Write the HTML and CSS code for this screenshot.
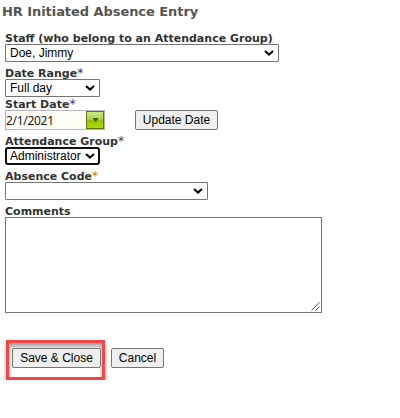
FILE: index.html
```html
<!DOCTYPE html>
<html lang="en">
  <head>
    <meta charset="UTF-8" />
    <meta name="viewport" content="width=device-width, initial-scale=1" />
    <title>HR Initiated Absence Entry</title>
    <link rel="stylesheet" href="styles.css">
  </head>
  <body>
    <h1 class="page-title">HR Initiated Absence Entry</h1>

    <form class="absence-form">
      <div class="field">
        <label for="staff">Staff (who belong to an Attendance Group)</label>
        <div class="select-box staff">
          <select id="staff"><option>Doe, Jimmy</option></select>
          <svg class="chevron" viewBox="0 0 10 6"><path d="M1 1l4 3.6L9 1" /></svg>
        </div>
      </div>

      <div class="field date-range-field">
        <label for="date-range">Date Range<span class="required">*</span></label>
        <div class="select-box short">
          <select id="date-range"><option>Full day</option></select>
          <svg class="chevron" viewBox="0 0 10 6"><path d="M1 1l4 3.6L9 1" /></svg>
        </div>
      </div>

      <div class="field">
        <label for="start-date">Start Date<span class="required">*</span></label>
        <div class="date-row">
          <div class="date-picker">
            <input type="text" id="start-date" value="2/1/2021" />
            <button type="button" class="date-toggle" aria-label="Open calendar">
              <svg viewBox="0 0 5 4"><path d="M0 0h5v1L3 3.5H2L0 1z" /></svg>
            </button>
          </div>
          <button type="button" class="btn update-btn">Update Date</button>
        </div>
      </div>

      <div class="field">
        <label for="group">Attendance Group<span class="required">*</span></label>
        <div class="select-box short focused">
          <select id="group"><option>Administrator</option></select>
          <svg class="chevron" viewBox="0 0 10 6"><path d="M1 1l4 3.6L9 1" /></svg>
        </div>
      </div>

      <div class="field">
        <label for="code">Absence Code<span class="required warn">*</span></label>
        <div class="select-box code">
          <select id="code"><option></option></select>
          <svg class="chevron" viewBox="0 0 10 6"><path d="M1 1l4 3.6L9 1" /></svg>
        </div>
      </div>

      <div class="field">
        <label for="comments">Comments</label>
        <div class="comments-box">
          <textarea id="comments"></textarea>
          <svg class="grip" viewBox="0 0 9 9"><path d="M0.5 8.5l8-8M4.5 8.5l4-4" /></svg>
        </div>
      </div>

      <div class="actions">
        <div class="highlight">
          <button type="button" class="btn save-btn">Save &amp; Close</button>
        </div>
        <button type="button" class="btn cancel-btn">Cancel</button>
      </div>
    </form>
  </body>
</html>
```
FILE: styles.css
```css
* {
  box-sizing: border-box;
}

body {
  margin: 0;
  background-color: #fff;
  font-family: "DejaVu Sans", Verdana, sans-serif;
  color: #333;
}

.page-title {
  margin: 0;
  padding: 4px 0 0 2px;
  height: 31px;
  font-size: 13px;
  line-height: 16px;
  font-weight: bold;
  letter-spacing: -0.06px;
  color: #555;
  white-space: nowrap;
}

.absence-form {
  padding-left: 5px;
}

.field {
  margin-bottom: 4px;
}

.date-range-field {
  margin-bottom: 0;
}

label {
  display: block;
  height: 13px;
  font-size: 11px;
  line-height: 15px;
  font-weight: bold;
  white-space: nowrap;
}

.required {
  font-size: 12px;
  line-height: 1;
  font-weight: normal;
  color: #2b3f6b;
}

.required.warn {
  color: #c47a1c;
}

select,
input,
textarea,
.btn {
  margin: 0;
  font-family: "Liberation Sans", Arial, sans-serif;
  font-size: 12px;
  color: #000;
}

.select-box {
  position: relative;
  height: 18px;
}

.select-box select {
  display: block;
  width: 100%;
  height: 18px;
  padding: 0 4px;
  border: 1px solid #767676;
  border-radius: 1px;
  background-color: #fff;
  appearance: none;
  outline: none;
}

.staff {
  width: 274px;
}

.short {
  width: 95px;
}

.code {
  width: 203px;
}

.select-box.focused select {
  padding: 0 3px;
  border: 2px solid #101010;
  border-radius: 3px;
}

.chevron {
  position: absolute;
  top: 6px;
  right: 5px;
  width: 10px;
  height: 6px;
  fill: none;
  stroke: #000;
  stroke-width: 2;
  pointer-events: none;
}

.date-row {
  display: flex;
  gap: 30px;
}

.date-picker {
  display: flex;
  width: 100px;
  height: 20px;
  border: 1px solid #b8b8b8;
  background-color: #fdfdf6;
}

.date-picker input {
  flex: 1;
  min-width: 0;
  padding: 1px 0 0;
  border: none;
  background: transparent;
  font-family: "Noto Sans", "Open Sans", sans-serif;
  font-size: 12px;
  letter-spacing: -0.3px;
  color: #222;
  outline: none;
}

.date-toggle {
  display: flex;
  align-items: center;
  justify-content: center;
  width: 18px;
  height: 18px;
  padding: 0;
  border: 1px solid #557f05;
  background: linear-gradient(#d2e48c 0%, #b4d444 45%, #98c008 52%, #b0d800 100%);
}

.date-toggle svg {
  width: 5px;
  height: 4px;
  fill: #3f5c05;
}

.btn {
  height: 20px;
  padding: 0;
  border: 1px solid #767676;
  border-radius: 2px;
  background-color: #efefef;
  white-space: nowrap;
}

.update-btn {
  width: 83px;
}

.comments-box {
  position: relative;
  width: 317px;
  height: 96px;
}

textarea {
  display: block;
  width: 100%;
  height: 100%;
  padding: 2px;
  border: 1px solid #767676;
  border-radius: 0;
  resize: none;
}

.grip {
  position: absolute;
  right: 2px;
  bottom: 2px;
  width: 9px;
  height: 9px;
  fill: none;
  stroke: #555;
  stroke-width: 1;
}

.actions {
  display: flex;
  align-items: flex-start;
  gap: 6px;
  margin-top: 27px;
  padding-left: 1px;
}

.highlight {
  width: 99px;
  height: 40px;
  padding: 5px 0 0 3px;
  border: 3px solid #f84444;
  box-shadow: 0 4px 4px rgba(0, 0, 0, 0.35), inset 0 4px 4px rgba(0, 0, 0, 0.35);
}

.save-btn {
  display: block;
  width: 89px;
}

.cancel-btn {
  width: 53px;
  margin-top: 8px;
}
```
